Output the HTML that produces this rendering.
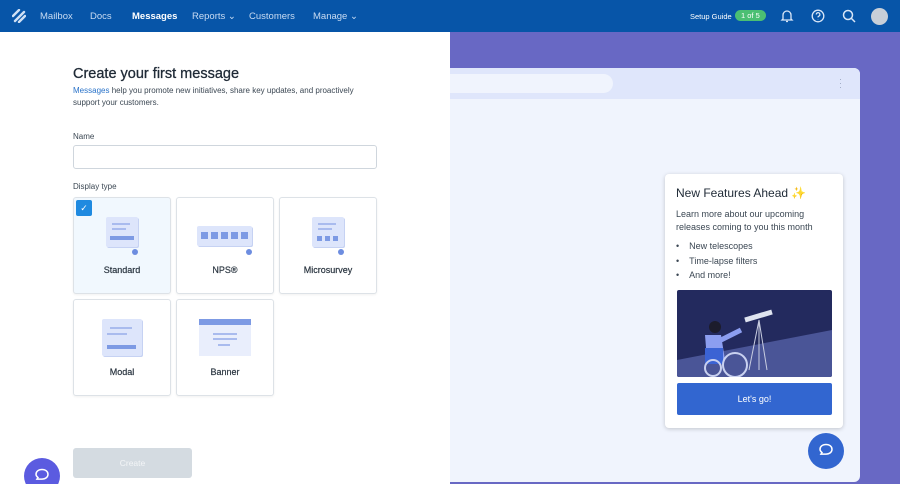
<!DOCTYPE html>
<html><head><meta charset="utf-8"><style>
*{box-sizing:border-box;margin:0;padding:0}
html,body{width:900px;height:484px;overflow:hidden}
body{font-family:"Liberation Sans",sans-serif;background:#6868c4}
#w{position:relative;width:900px;height:484px;overflow:hidden;background:#6868c4}
.nav{position:absolute;left:0;top:0;width:900px;height:32px;background:#0755a8;color:#c9dcf3;font-size:9.5px}
.nav span{position:absolute;top:11px}
.left{position:absolute;left:0;top:32px;width:450px;height:452px;background:#fff}
h1{position:absolute;left:73px;top:66px;font-size:14.5px;font-weight:normal;color:#1f2a36;-webkit-text-stroke:.3px #1f2a36}
.sub{position:absolute;left:73px;top:85px;font-size:8px;color:#3b4753;line-height:11.5px;width:300px}
.lbl{position:absolute;left:73px;font-size:8px;color:#3b4753}
.inp{position:absolute;left:73px;top:145px;width:304px;height:24px;border:1px solid #cfd6dd;border-radius:3px}
.card{position:absolute;width:98px;height:97px;border:1px solid #dde2e7;border-radius:3px;background:#fff;box-shadow:0 1px 2px rgba(0,0,0,.06)}
.card .t{position:absolute;left:0;right:0;top:67px;text-align:center;font-size:9px;color:#2a3540;-webkit-text-stroke:.2px #2a3540}
.ill{position:absolute;background:#dde5fb;border-radius:2px;box-shadow:1px 1px 0 #c6d2f3}
.bar{position:absolute;height:2px;background:#a9bbee}
.dot{position:absolute;width:6px;height:6px;border-radius:50%;background:#6d8de0}
.frame{position:absolute;left:450px;top:68px;width:410px;height:414px;background:#f0f4fd;border-radius:0 6px 6px 0;overflow:hidden}
.popup{position:absolute;left:665px;top:174px;width:178px;height:254px;background:#fff;border-radius:4px;box-shadow:0 1px 4px rgba(0,0,0,.2)}
.chat{position:absolute;width:36px;height:36px;border-radius:50%;background:#3266d0}
</style></head><body><div id="w">
<div class="nav">
<svg style="position:absolute;left:12px;top:9px" width="14" height="14" viewBox="0 0 14 14"><path d="M1 7L7 1M3 12L12 3M7 13L13 7" stroke="#cfe0f5" stroke-width="2.4" stroke-linecap="round"/></svg>
<span style="left:40px">Mailbox</span><span style="left:90px">Docs</span><span style="left:132px;color:#fff;font-weight:bold">Messages</span><span style="left:192px">Reports ⌄</span><span style="left:249px">Customers</span><span style="left:313px">Manage ⌄</span>
<span style="left:690px;color:#fff;font-size:7.5px;top:12px">Setup Guide</span>
<span style="left:735px;top:10px;background:#4bbf73;color:#fff;font-size:7.5px;border-radius:6px;padding:1px 6px">1 of 5</span>
<svg style="position:absolute;left:780px;top:9px" width="14" height="14" viewBox="0 0 14 14" fill="none" stroke="#d9e6f7" stroke-width="1.3"><path d="M3 10V6a4 4 0 018 0v4l1 1H2zM6 12.5h2"/></svg>
<svg style="position:absolute;left:811px;top:9px" width="14" height="14" viewBox="0 0 14 14" fill="none" stroke="#d9e6f7" stroke-width="1.3"><circle cx="7" cy="7" r="5.8"/><path d="M5.3 5.5a1.8 1.8 0 113 1.3c-.8.5-1.3.8-1.3 1.6M7 10v.3"/></svg>
<svg style="position:absolute;left:842px;top:9px" width="14" height="14" viewBox="0 0 14 14" fill="none" stroke="#d9e6f7" stroke-width="1.5"><circle cx="6" cy="6" r="4.5"/><path d="M9.5 9.5l3.5 3.5"/></svg>
<div style="position:absolute;left:871px;top:8px;width:17px;height:17px;border-radius:50%;background:#c8cfd8"></div>
</div>
<div class="left"></div>
<h1>Create your first message</h1>
<div class="sub"><span style="color:#2a73c9">Messages</span> help you promote new initiatives, share key updates, and proactively support your customers.</div>
<div class="lbl" style="top:132px">Name</div>
<div class="inp"></div>
<div class="lbl" style="top:182px">Display type</div>
<div class="card" style="left:73px;top:197px;background:#f1f8fe">
<div style="position:absolute;left:2px;top:2px;width:16px;height:16px;background:#1f8ae0;border-radius:2px;color:#fff;font-size:9px;text-align:center;line-height:16px">✓</div>
<div class="ill" style="left:32px;top:19px;width:32px;height:30px"><div class="bar" style="left:6px;top:6px;width:18px"></div><div class="bar" style="left:6px;top:11px;width:14px"></div><div class="bar" style="left:4px;top:19px;width:24px;height:4px;background:#7d9ae4"></div></div><div class="dot" style="left:58px;top:51px"></div>
<div class="t">Standard</div></div>
<div class="card" style="left:176px;top:197px">
<div class="ill" style="left:20px;top:28px;width:55px;height:20px"><div style="position:absolute;left:4px;top:6px;width:47px;height:7px;background:repeating-linear-gradient(90deg,#7d9ae4 0 7px,transparent 7px 10px)"></div></div><div class="dot" style="left:69px;top:51px"></div>
<div class="t">NPS®</div></div>
<div class="card" style="left:279px;top:197px">
<div class="ill" style="left:32px;top:19px;width:32px;height:30px"><div class="bar" style="left:6px;top:6px;width:18px"></div><div class="bar" style="left:6px;top:11px;width:14px"></div><div style="position:absolute;left:5px;top:19px;width:22px;height:5px;background:repeating-linear-gradient(90deg,#7d9ae4 0 5px,transparent 5px 8px)"></div></div><div class="dot" style="left:58px;top:51px"></div>
<div class="t">Microsurvey</div></div>
<div class="card" style="left:73px;top:299px">
<div class="ill" style="left:28px;top:19px;width:40px;height:37px"><div class="bar" style="left:8px;top:8px;width:22px"></div><div class="bar" style="left:5px;top:14px;width:20px"></div><div class="bar" style="left:5px;top:26px;width:29px;height:4px;background:#7d9ae4"></div></div>
<div class="t">Modal</div></div>
<div class="card" style="left:176px;top:299px">
<div style="position:absolute;left:22px;top:19px;width:52px;height:37px;background:#e9eefc"><div style="height:6px;background:#7d9ae4"></div><div class="bar" style="left:14px;top:14px;width:24px;height:1.5px"></div><div class="bar" style="left:14px;top:19px;width:24px;height:1.5px"></div><div class="bar" style="left:19px;top:25px;width:12px;height:1.5px"></div></div>
<div class="t">Banner</div></div>
<div style="position:absolute;left:73px;top:448px;width:119px;height:30px;background:#d4dbe1;border-radius:3px;color:#f3f5f7;font-size:8.5px;text-align:center;line-height:30px">Create</div>
<div class="chat" style="left:24px;top:458px;background:#5b5be0"></div>
<svg style="position:absolute;left:34px;top:468px" width="16" height="14" viewBox="0 0 16 14" fill="none" stroke="#fff" stroke-width="1.5"><path d="M8 1.5c3.5 0 6 2 6 4.8s-2.5 4.8-6 4.8H3l1-1.5C2.8 8.7 2 7.6 2 6.3 2 3.5 4.5 1.5 8 1.5z"/></svg>
<div class="frame">
<div style="position:absolute;left:0;top:0;width:410px;height:31px;background:#dfe6fb"></div>
<div style="position:absolute;left:0;top:6px;width:163px;height:19px;background:#f0f4fd;border-radius:0 10px 10px 0"></div>
<div style="position:absolute;left:389px;top:9px;color:#9aa6c0;font-size:9px;line-height:4px">·<br>·<br>·</div>
</div>
<div class="popup">
<div style="position:absolute;left:11px;top:12px;font-size:12px;color:#1f2a36">New Features Ahead <span style="color:#f5d45a">✨</span></div>
<div style="position:absolute;left:11px;top:34px;font-size:9px;line-height:12.5px;color:#3b4753;width:160px">Learn more about our upcoming releases coming to you this month</div>
<div style="position:absolute;left:11px;top:65px;font-size:9px;line-height:14.5px;color:#3b4753">•&nbsp;&nbsp;&nbsp;&nbsp;New telescopes<br>•&nbsp;&nbsp;&nbsp;&nbsp;Time-lapse filters<br>•&nbsp;&nbsp;&nbsp;&nbsp;And more!</div>
<svg style="position:absolute;left:12px;top:116px;border-radius:2px" width="155" height="87" viewBox="0 0 155 87">
<rect width="155" height="87" fill="#232a5e"/><path d="M0 70L155 40V87H0z" fill="#4a5597"/>
<path d="M68 30L95 22" stroke="#dfe4f0" stroke-width="5"/><path d="M82 30L72 80M82 30L90 80M82 30L82 80" stroke="#c8cde0" stroke-width="1"/>
<circle cx="38" cy="37" r="6" fill="#1c1c2c"/><path d="M28 45h16l4 25H30z" fill="#8c9ef0"/><path d="M44 50l20-10" stroke="#8c9ef0" stroke-width="5"/>
<rect x="28" y="58" width="18" height="16" fill="#3b63d4"/><circle cx="58" cy="75" r="12" fill="none" stroke="#c9d1f0" stroke-width="2"/><circle cx="36" cy="78" r="8" fill="none" stroke="#c9d1f0" stroke-width="2"/>
</svg>
<div style="position:absolute;left:12px;top:209px;width:155px;height:32px;background:#3266d0;border-radius:2px;color:#fff;font-size:9px;text-align:center;line-height:32px">Let's go!</div>
</div>
<div class="chat" style="left:808px;top:433px"></div>
<svg style="position:absolute;left:818px;top:443px" width="16" height="14" viewBox="0 0 16 14" fill="none" stroke="#fff" stroke-width="1.5"><path d="M8 1.5c3.5 0 6 2 6 4.8s-2.5 4.8-6 4.8H3l1-1.5C2.8 8.7 2 7.6 2 6.3 2 3.5 4.5 1.5 8 1.5z"/></svg>
</div></body></html>
